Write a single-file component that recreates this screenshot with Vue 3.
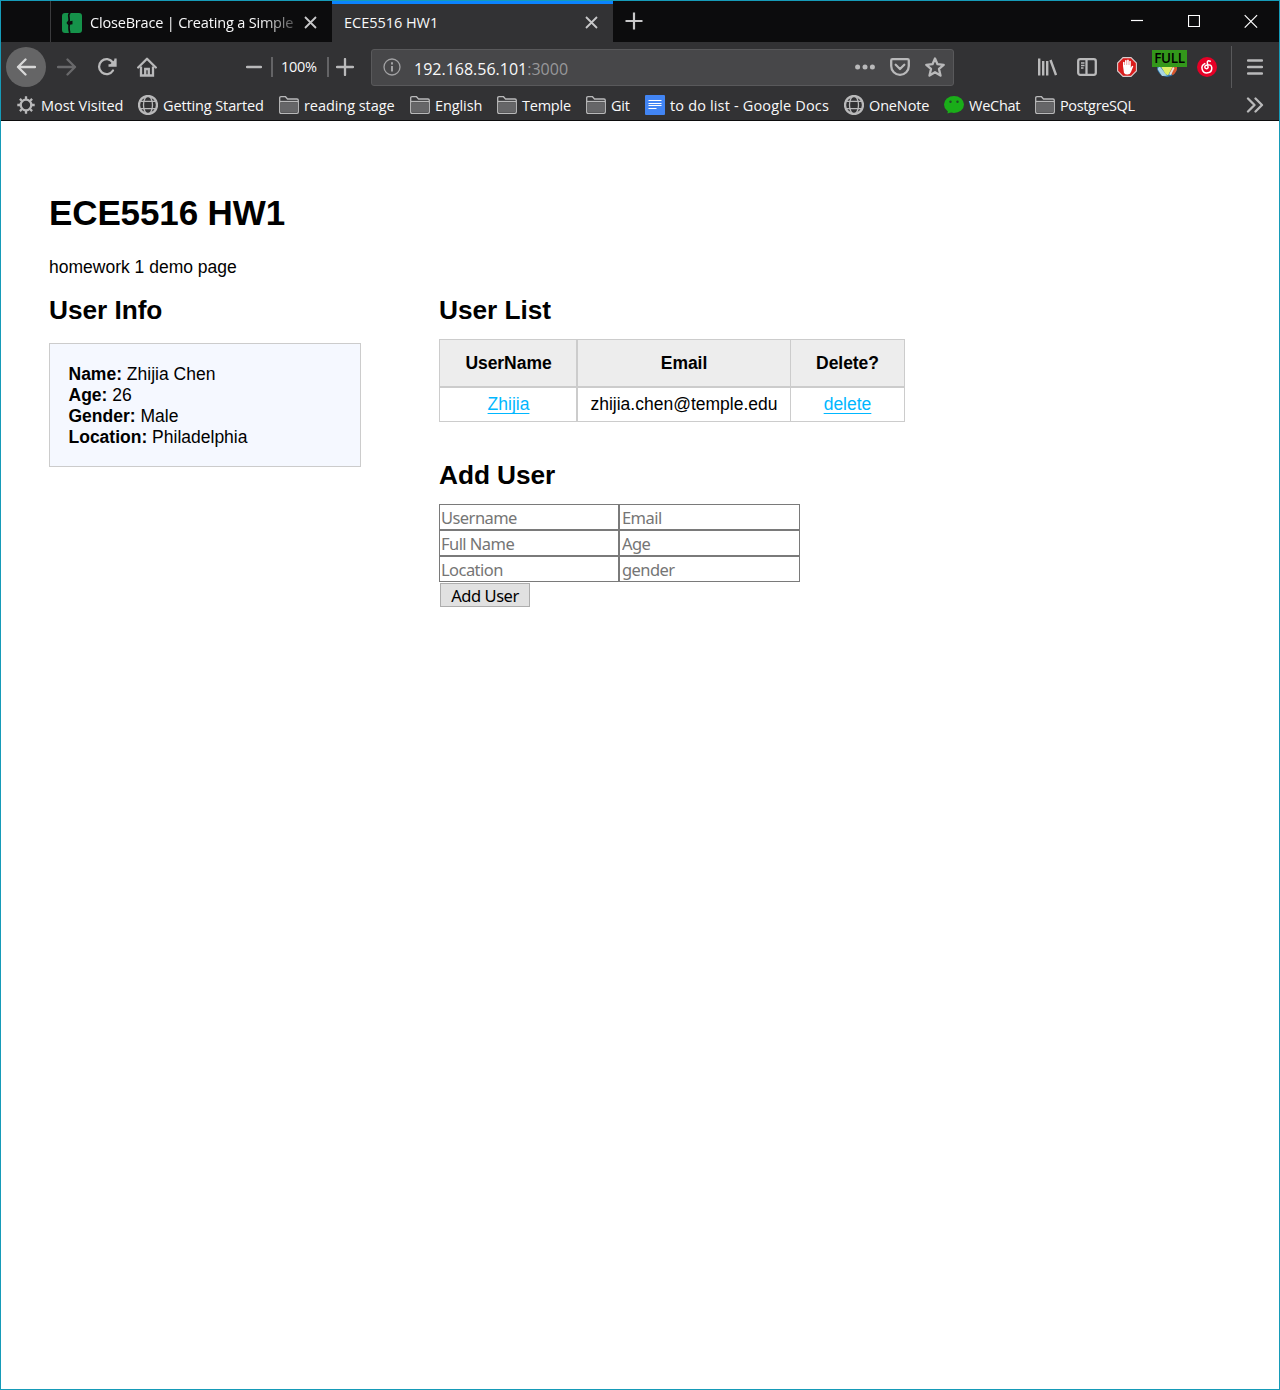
<script setup>
const bookmarks = [
  { label: 'Most Visited', icon: 'gear', width: 121, spacing: -0.02 },
  { label: 'Getting Started', icon: 'globe', width: 141, spacing: -0.12 },
  { label: 'reading stage', icon: 'folder', width: 131, spacing: -0.06 },
  { label: 'English', icon: 'folder', width: 87, spacing: -0.09 },
  { label: 'Temple', icon: 'folder', width: 89, spacing: -0.23 },
  { label: 'Git', icon: 'folder', width: 59, spacing: -0.18 },
  { label: 'to do list - Google Docs', icon: 'doc', width: 199, spacing: 0.16 },
  { label: 'OneNote', icon: 'globe', width: 100, spacing: -0.15 },
  { label: 'WeChat', icon: 'wechat', width: 91, spacing: -0.25 },
  { label: 'PostgreSQL', icon: 'folder', width: 110, spacing: -0.35 },
]
const info = [
  ['Name:', 'Zhijia Chen'],
  ['Age:', '26'],
  ['Gender:', 'Male'],
  ['Location:', 'Philadelphia'],
]
const fields = ['Username', 'Email', 'Full Name', 'Age', 'Location', 'gender']
</script>

<template>
  <div class="window">
    <header class="chrome">
      <div class="tabs">
        <div class="tab first">
          <svg class="fav" width="20" height="20" viewBox="0 0 20 20">
            <rect width="20" height="20" rx="3" fill="#15924a" />
            <path d="M8.200 0q-1.700 1-1.400 3t.4 4.500L5.500 10l1.700 2q-.6 4 .6 8" fill="none" stroke="#0c0c0d" stroke-width="1.700" />
            <path d="M6.500 8.500l4-.8v3.600l-4 .7z" fill="#0c0c0d" />
          </svg>
          <span class="tab-title fade">CloseBrace | Creating a Simple</span>
          <svg class="close" width="13" height="13" viewBox="0 0 13 13"><path d="M1 1l11 11M12 1L1 12" /></svg>
        </div>
        <div class="tab active">
          <span class="tab-title">ECE5516 HW1</span>
          <svg class="close" width="13" height="13" viewBox="0 0 13 13"><path d="M1 1l11 11M12 1L1 12" /></svg>
        </div>
        <svg class="newtab" width="18" height="18" viewBox="0 0 18 18"><path d="M9 .5v17M.5 9h17" /></svg>
        <div class="controls">
          <svg width="12" height="14" viewBox="0 0 12 14"><path d="M0 6.500h12" /></svg>
          <svg width="12" height="14" viewBox="0 0 12 14"><path d="M.5 1.500h11v11H.5z" /></svg>
          <svg width="14" height="14" viewBox="0 0 14 14"><path d="M.7 1.200l12.400 12.400M13.100 1.200L.7 13.600" /></svg>
        </div>
      </div>

      <div class="nav">
        <div class="back">
          <svg width="20" height="18" viewBox="0 0 20 18"><path d="M9.500 1.500L2 9l7.500 7.500M2 9h17" class="line round" /></svg>
        </div>
        <svg class="forward" width="20" height="18" viewBox="0 0 20 18"><path d="M10.500 1.500L18 9l-7.500 7.500M18 9H1" class="line round" /></svg>
        <svg class="reload" width="20" height="20" viewBox="0 0 20 20">
          <path d="M16 13.500a7.500 7.500 0 1 1-.2-8" class="line round" />
          <path d="M18.500 1.500v7h-7" class="line" /><path d="M18.500 2v6.500H12z" fill="#b9b9ba" />
        </svg>
        <svg class="home" width="20" height="20" viewBox="0 0 20 20">
          <path d="M1.200 10.500L10 1.700l8.800 8.800" class="line round" />
          <path d="M4 9.500v9h12v-9" class="line" />
          <path d="M8.200 18v-6h3.600v6" class="line" stroke-width="1.800" />
        </svg>
        <div class="zoom">
          <svg width="16" height="18" viewBox="0 0 16 18"><path d="M1 9h14" class="line round" /></svg>
          <i></i><span>100%</span><i></i>
          <svg width="18" height="18" viewBox="0 0 18 18"><path d="M9 1v16M1 9h16" class="line round" /></svg>
        </div>
        <div class="url">
          <svg width="18" height="18" viewBox="0 0 18 18">
            <circle cx="9" cy="9" r="8" fill="none" stroke="#a2a2a4" stroke-width="1.300" />
            <path d="M9 4.200v2.200M9 8v5.600" stroke="#a2a2a4" stroke-width="2" />
          </svg>
          <span class="address">192.168.56.101<b>:3000</b></span>
          <svg class="dots" width="20" height="6" viewBox="0 0 20 6">
            <circle cx="2.600" cy="3" r="2.500" /><circle cx="10" cy="3" r="2.500" /><circle cx="17.400" cy="3" r="2.500" />
          </svg>
          <svg class="pocket" width="20" height="18" viewBox="0 0 20 18">
            <path d="M2.500 1.200h15q1.300 0 1.300 1.300V8a8.800 8.800 0 0 1-17.600 0V2.500q0-1.300 1.300-1.300z" class="line" />
            <path d="M5.700 6.800L10 11l4.300-4.200" class="line round" />
          </svg>
          <svg class="star" width="20" height="20" viewBox="0 0 20 20">
            <path d="M10 1.500l2.500 5.700 6.200.6-4.700 4.100 1.500 6.700L10 15.200l-5.500 3.400L6 11.900 1.300 7.800l6.200-.6z" class="line round" />
          </svg>
        </div>
        <div class="tools">
          <svg width="20" height="20" viewBox="0 0 20 20"><path d="M2.200 1.500v17M6.200 4v14.500M10.200 4v14.500M13.500 3L19 18" class="line bars" /></svg>
          <svg width="20" height="20" viewBox="0 0 20 20">
            <rect x="1.200" y="2.200" width="17.600" height="15.600" rx="2" class="line" />
            <path d="M9.500 2.500v15" class="line" stroke-width="2" /><path d="M4 6h3.500M4 8.500h3.500M4 11h2.500" class="line thin" />
          </svg>
          <svg width="20" height="20" viewBox="0 0 20 20">
            <path d="M6 .6h8L19.400 6v8L14 19.400H6L.6 14V6z" fill="#d91c1c" stroke="#d8cccc" stroke-width="1.100" />
            <path d="M6 9V5.200q.9-1 1.600 0V8h.4V3.500q.9-1 1.700 0V8h.4V3q.9-1 1.700 0v5h.4V4.300q.9-1 1.600 0V11l1-2q1-.6 1.500.3L14 15q-1 2.500-3.500 2.500T7 16z" fill="#fff" />
          </svg>
          <div class="dm">
            <svg width="20" height="20" viewBox="0 0 20 20">
              <circle cx="10" cy="10" r="10" fill="#2f76ad" />
              <path d="M10 10L15 1a10 10 0 0 1 .5 17.300z" fill="#d8552c" />
              <path d="M2.500 9L10 18.800 5 19 .5 12z" fill="#a9d5e3" />
              <path d="M3 8h13.500L11 18.500 8.500 17z" fill="#dcee66" />
              <path d="M12 17.500l4-7.500 1.500 1-3.500 7z" fill="#e9e4dc" />
            </svg>
            <em>FULL</em>
          </div>
          <svg width="20" height="20" viewBox="0 0 20 20">
            <circle cx="10" cy="10" r="10" fill="#e60026" />
            <path d="M13.300 4.300q-3-1.300-3 1.200l.8 5a1.700 1.700 0 1 1-1.300-2.200q4.600-1.500 5 2.600a4.900 4.900 0 1 1-7-4.300" fill="none" stroke="#fff" stroke-width="1.500" stroke-linecap="round" />
          </svg>
        </div>
        <div class="menu">
          <svg width="16" height="16" viewBox="0 0 16 16"><path d="M1 1.500h14M1 8h14M1 14.500h14" class="line round" /></svg>
        </div>
      </div>

      <div class="bookmarks">
        <div v-for="b in bookmarks" :key="b.label" class="bookmark" :style="{ width: b.width + 'px', letterSpacing: b.spacing + 'px' }">
          <svg v-if="b.icon === 'gear'" width="20" height="20" viewBox="0 0 20 20" class="gear">
            <circle cx="9" cy="10" r="5.300" class="line" />
            <path d="M9 1.300v3M9 15.700v3M.3 10h3M14.700 10h3M2.900 3.900L5 6M13 14l2.100 2.100M2.900 16.100L5 14M13 6l2.100-2.100" class="line" />
          </svg>
          <svg v-else-if="b.icon === 'globe'" width="20" height="20" viewBox="0 0 20 20">
            <circle cx="10" cy="10" r="9" class="line" />
            <ellipse cx="10" cy="10" rx="4.500" ry="9" class="line thin" />
            <path d="M2 6.300h16M2 13.700h16" class="line thin" />
          </svg>
          <svg v-else-if="b.icon === 'folder'" width="20" height="20" viewBox="0 0 20 20">
            <path d="M.7 17V3q0-1.300 1.300-1.300h4.500L8.500 4H18q1.300 0 1.300 1.300V17q0 1.300-1.300 1.300H2Q.7 18.300.7 17z" fill="#38383a" stroke="#b9b9ba" stroke-width="1.300" />
            <path d="M2 7.500h16V17H2z" fill="#666668" /><path d="M1 6.500h18" class="line thin" />
          </svg>
          <svg v-else-if="b.icon === 'doc'" width="20" height="20" viewBox="0 0 20 20">
            <rect width="20" height="20" rx="1" fill="#4285f4" />
            <path d="M3.500 5.500h13M3.500 8.500h13M3.500 10.500h13M3.500 13.500h8" stroke="#fff" stroke-width="1.200" />
          </svg>
          <svg v-else width="20" height="20" viewBox="0 0 20 20">
            <ellipse cx="10" cy="9.500" rx="10" ry="8.500" fill="#1aad19" /><path d="M4 15l-.5 3.500L8 17z" fill="#1aad19" />
            <circle cx="6.500" cy="6.700" r="1.200" fill="#24472a" /><circle cx="13.500" cy="6.700" r="1.200" fill="#24472a" />
          </svg>
          <span>{{ b.label }}</span>
        </div>
        <svg class="more" width="18" height="16" viewBox="0 0 18 16"><path d="M2 1.500L8.500 8 2 14.500M9.500 1.500L16 8l-6.500 6.500" class="line round" /></svg>
      </div>
    </header>

    <main>
      <h1>ECE5516 HW1</h1>
      <p>homework 1 demo page</p>
      <div class="columns">
        <section class="info">
          <h2>User Info</h2>
          <div class="card">
            <div v-for="[k, v] in info" :key="k"><strong>{{ k }}</strong> {{ v }}</div>
          </div>
        </section>
        <section>
          <h2>User List</h2>
          <div class="table">
            <div class="row head"><span>UserName</span><span>Email</span><span>Delete?</span></div>
            <div class="row"><span><a>Zhijia</a></span><span>zhijia.chen@temple.edu</span><span><a>delete</a></span></div>
          </div>
          <h2 class="add">Add User</h2>
          <div class="form">
            <input v-for="f in fields" :key="f" type="text" :placeholder="f" />
          </div>
          <button>Add User</button>
        </section>
      </div>
    </main>
  </div>
</template>

<style scoped>
* { box-sizing: border-box; }
svg { display: block; flex: none; }
.window { height: 1390px; border: 1px solid #169bb8; background: #fff; color: #000; font: 17.5px/21px "Liberation Sans", Arial, sans-serif; }
.chrome { height: 120px; background: #323234; border-bottom: 1px solid #0c0c0d; color: #f9f9fa; font: 14.5px/20px "Open Sans", "Noto Sans", sans-serif; white-space: nowrap; }
.line { fill: none; stroke: #b9b9ba; stroke-width: 2.300; }
.thin { stroke-width: 1.300; }
.bars { stroke-width: 2.400; }
.round { stroke-linecap: round; stroke-linejoin: round; }

.tabs { display: flex; height: 41px; background: #0c0c0d; }
.tab { display: flex; align-items: center; width: 281px; padding: 2px 15px 0 12px; }
.first { margin-left: 49px; width: 282px; border-left: 1px solid #3b3b3d; padding-left: 11px; }
.fav { margin-right: 8px; }
.tab-title { flex: 1; overflow: hidden; letter-spacing: -0.030px; }
.fade { flex: none; width: 206px; margin-right: 8px; letter-spacing: -0.180px; -webkit-mask-image: linear-gradient(90deg, #000 170px, transparent 218px); mask-image: linear-gradient(90deg, #000 170px, transparent 218px); }
.active { background: #323234; border-top: 3px solid #0a84ff; padding-top: 0; }
.active .close { margin-top: -1px; }
.close path, .newtab path { fill: none; stroke: #c8c8c9; stroke-width: 1.800; }
.newtab path { stroke-width: 2.200; }
.newtab { margin: 11px 0 0 12px; }
.controls { display: flex; margin: 13px 21px 0 auto; gap: 45px; }
.controls svg:last-child { margin-left: -1px; }
.controls path { fill: none; stroke: #fff; stroke-width: 1.200; }

.nav { display: flex; align-items: center; height: 47px; padding-top: 3px; }
.back { display: flex; align-items: center; justify-content: center; width: 40px; height: 40px; margin-left: 5px; border-radius: 50%; background: #656566; flex: none; }
.back .line { stroke: #d8d8d8; }
.forward { margin-left: 11px; }
.forward .line { stroke: #69696b; }
.reload { margin-left: 20px; }
.home { margin-left: 20px; }
.zoom { display: flex; align-items: center; margin-left: 89px; height: 20px; }
.zoom i { width: 2px; height: 20px; background: #646466; margin-left: 9px; }
.zoom span { width: 37px; margin-left: 8px; letter-spacing: -0.250px; }
.zoom svg:last-child { margin-left: 7px; }
.url { display: flex; align-items: center; width: 583px; height: 37px; margin: 1px 0 0 17px; padding: 0 8px 1px 11px; background: #474749; border: 1px solid #59595b; border-radius: 3px; }
.address { flex: 1; margin: 4px 0 0 13px; font-size: 16px; letter-spacing: 0; }
.address b { color: #98989a; font-weight: 400; }
.dots { fill: #b9b9ba; margin-right: 15px; }
.pocket { margin-right: 15px; }
.tools { display: flex; gap: 20px; margin-left: 83px; }
.dm { position: relative; }
.dm em { position: absolute; left: -5px; top: -7px; width: 35px; height: 17px; background: #33971b; color: #000; font: 600 13.500px/16px "Open Sans", sans-serif; text-align: center; letter-spacing: -0.300px; }
.menu { display: flex; align-items: center; height: 42px; margin-left: 14px; padding-left: 15px; border-left: 1px solid #59595b; }

.bookmarks { display: flex; align-items: center; height: 31px; padding-left: 16px; }
.bookmark { display: flex; align-items: center; flex: none; }
.bookmark span { margin: 2px 0 0 5px; }
.bookmark:first-child span { margin-left: 4px; }
.more { margin: 0 15px 0 auto; }

main { padding: 71px 48px; }
h1 { margin: 0; font-size: 35px; line-height: 41px; letter-spacing: -0.120px; }
p { margin: 24px 0 0; }
.columns { display: flex; margin-top: 16px; }
.info { width: 312px; margin-right: 78px; }
h2 { margin: 0; font-size: 26.250px; line-height: 32px; letter-spacing: -0.050px; }
.card { height: 124px; margin-top: 17px; padding: 20px 18.500px; border: 1px solid #ccc; background: #f5f8ff; }
.table { width: 466px; margin-top: 13px; border: 1px solid #ccc; }
.row { display: grid; grid-template-columns: 137px 213px 114px; height: 34px; line-height: 32px; text-align: center; }
.row span + span { border-left: 1px solid #ccc; }
.row span:nth-child(2) { border-left-width: 2px; margin-left: -1px; }
.head { height: 48px; line-height: 46px; background: #ededed; border-bottom: 2px solid #ccc; font-weight: 700; letter-spacing: -0.050px; }
.row:last-child { height: 33px; }
a { color: #00b7ff; text-decoration: underline; text-underline-offset: 3px; text-decoration-thickness: 1px; text-decoration-skip-ink: none; }
.add { margin-top: 37px; }
.form { display: grid; grid-template-columns: 180px 181px; margin-top: 13px; }
input { width: 100%; height: 26px; margin: 0; padding: 0 1px; border: 1px solid #7a7a7a; border-radius: 0; font: 16.500px "Noto Sans", sans-serif; letter-spacing: -0.550px; }
input:nth-child(even) { padding-left: 2px; }
input::placeholder { color: #757575; opacity: 1; }
button { display: block; width: 90px; height: 24px; margin: 1px 0 0 1px; padding: 1px 0 0; background: #e1e1e1; border: 1px solid #adadad; color: #000; font: 16.500px/21px "Noto Sans", sans-serif; letter-spacing: -0.450px; }
</style>

<style>
body { margin: 0; background: #fff; }
</style>
